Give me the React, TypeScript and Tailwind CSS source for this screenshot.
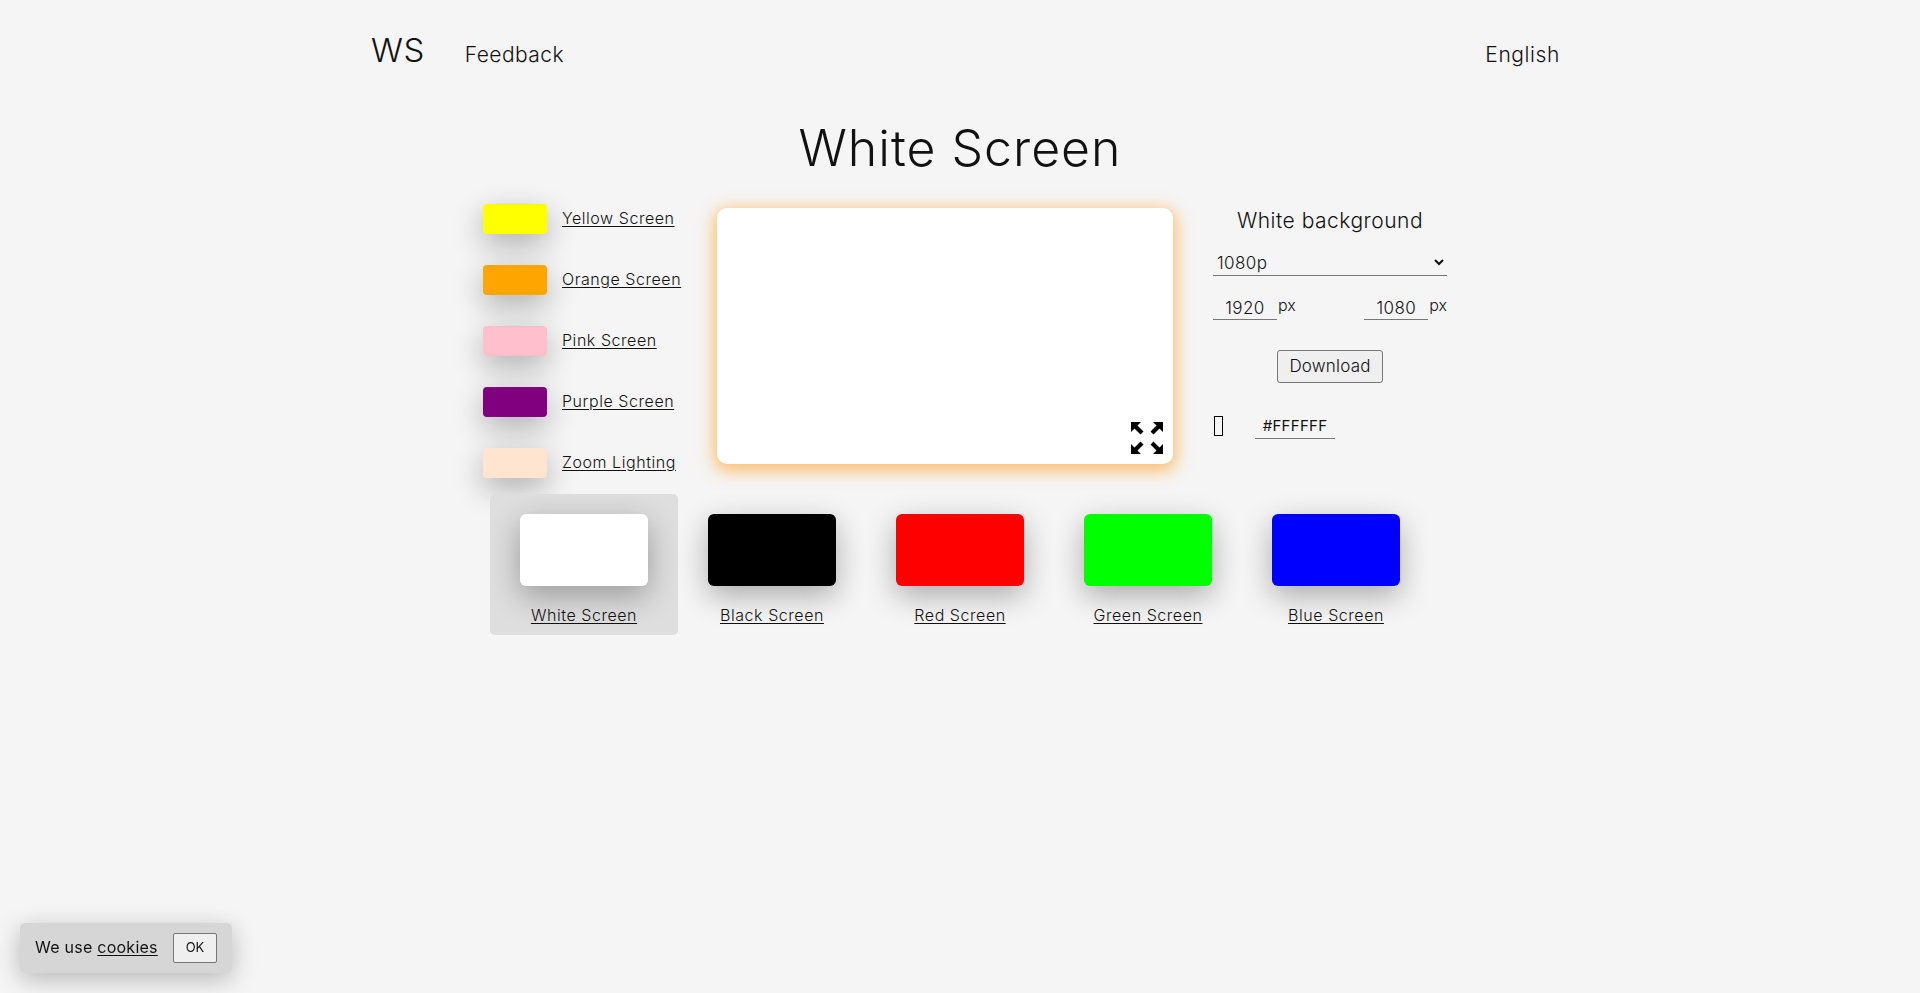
const sideScreens = [
  { name: 'Yellow Screen', color: 'bg-[#ffff00]' },
  { name: 'Orange Screen', color: 'bg-[#ffa500]' },
  { name: 'Pink Screen', color: 'bg-[#ffc0cb]' },
  { name: 'Purple Screen', color: 'bg-[#800080]' },
  { name: 'Zoom Lighting', color: 'bg-[#ffe4cf]' },
]

const mainScreens = [
  { name: 'White Screen', color: 'bg-white', active: true },
  { name: 'Black Screen', color: 'bg-black', active: false },
  { name: 'Red Screen', color: 'bg-[#ff0000]', active: false },
  { name: 'Green Screen', color: 'bg-[#00ff00]', active: false },
  { name: 'Blue Screen', color: 'bg-[#0000ff]', active: false },
]

function ExpandIcon() {
  const arrow = '0,0 10,0 6.5,3.5 12.5,9.5 9.5,12.5 3.5,6.5 0,10'
  return (
    <svg width="32" height="32" viewBox="0 0 32 32" className="absolute right-[10px] bottom-[10px]">
      <polygon points={arrow} />
      <polygon points={arrow} transform="matrix(-1 0 0 1 32 0)" />
      <polygon points={arrow} transform="matrix(1 0 0 -1 0 32)" />
      <polygon points={arrow} transform="matrix(-1 0 0 -1 32 32)" />
    </svg>
  )
}

export default function App() {
  return (
    <div className="min-h-[993px] bg-[#f5f5f5] text-[#111] font-['Inter','Liberation_Sans',sans-serif]">
      {/* header */}
      <header className="w-[1200px] mx-auto flex items-center pl-[11px] pt-[32px] h-[78px]">
        <a className="text-[33px] font-light leading-none tracking-[0.5px] -mt-[10px]">WS</a>
        <a className="ml-[40px] text-[21px] font-light tracking-[0.45px]">Feedback</a>
        <a className="ml-auto text-[21px] font-light tracking-[0.6px]">English</a>
      </header>

      <h1 className="mt-[38px] text-center text-[50px] leading-[64px] font-light tracking-[1px] text-[#111]">White Screen</h1>

      <div className="w-[1200px] mx-auto">
        {/* side list + preview + controls */}
        <div className="flex pl-[123px] mt-[28px]">
          <ul className="w-[234px] flex flex-col gap-[31px] -mt-[4px]">
            {sideScreens.map(s => (
              <li key={s.name} className="flex items-center h-[30px]">
                <div className={`w-[64px] h-[30px] rounded-[4px] shadow-[0_10px_30px_rgba(0,0,0,0.3)] ${s.color}`} />
                <a className="ml-[15px] -mt-[2px] text-[16px] font-light underline underline-offset-2 tracking-[0.55px] text-[#111]">{s.name}</a>
              </li>
            ))}
          </ul>

          <div className="relative w-[456px] h-[256px] rounded-[10px] bg-white shadow-[0_4px_16px_3px_rgba(255,170,60,0.72)]">
            <ExpandIcon />
          </div>

          <div className="w-[234px] ml-[40px]">
            <h2 className="text-center text-[21px] font-light leading-[26px] tracking-[0.5px]">White background</h2>
            <select defaultValue="1080p" className="mt-[14px] block w-full h-[28px] pt-[2px] border-b border-[#777] text-[17px] font-light tracking-[0.4px]">
              <option>1080p</option>
            </select>
            <div className="mt-[15px] flex justify-between">
              <div className="flex items-start">
                <input readOnly value="1920" className="w-[64px] h-[29px] pt-[5px] border-b border-[#777] text-center text-[17px] font-light tracking-[0.4px]" />
                <span className="ml-[1px] mt-[2px] text-[16px] font-light leading-[24px]">px</span>
              </div>
              <div className="flex items-start">
                <input readOnly value="1080" className="w-[64px] h-[29px] pt-[5px] border-b border-[#777] text-center text-[17px] font-light tracking-[0.4px]" />
                <span className="ml-[1px] mt-[2px] text-[16px] font-light leading-[24px]">px</span>
              </div>
            </div>
            <div className="mt-[30px] flex justify-center">
              <button className="w-[106px] h-[33px] rounded-[3px] border border-[#767676] bg-[#efefef] text-[17px] font-light tracking-[0.2px]">Download</button>
            </div>
            <div className="mt-[29px] flex items-center">
              <div className="w-[9px] h-[20px] ml-[1px] border border-black" />
              <input readOnly value="#FFFFFF" className="ml-[32px] w-[80px] h-[27px] border-b border-[#777] text-center text-[15px] font-normal tracking-[0.3px]" />
            </div>
          </div>
        </div>

        {/* main colours */}
        <div className="flex pl-[130px] mt-[16px]">
          {mainScreens.map(s => (
            <a key={s.name} className={`w-[188px] h-[141px] rounded-[5px] flex flex-col items-center pt-[20px] ${s.active ? 'bg-[#dedede]' : ''}`}>
              <div className={`w-[128px] h-[72px] rounded-[6px] shadow-[0_10px_30px_rgba(0,0,0,0.3)] ${s.color}`} />
              <span className="mt-[17px] text-[16px] font-light underline underline-offset-2 tracking-[0.55px] text-[#111]">{s.name}</span>
            </a>
          ))}
        </div>
      </div>

      {/* cookie notice */}
      <div className="fixed left-[20px] bottom-[20px] w-[212px] h-[50px] rounded-[5px] bg-[#d6d6d6] flex items-center pl-[15px] shadow-[0_6px_24px_rgba(0,0,0,0.25)]">
        <span className="text-[16px] font-normal tracking-[0.25px] -mt-[2px]">We use <a className="underline underline-offset-2">cookies</a></span>
        <button className="ml-auto mr-[15px] w-[44px] h-[30px] rounded-[2px] border border-[#767676] bg-[#efefef] text-[13px] font-normal">OK</button>
      </div>
    </div>
  )
}
